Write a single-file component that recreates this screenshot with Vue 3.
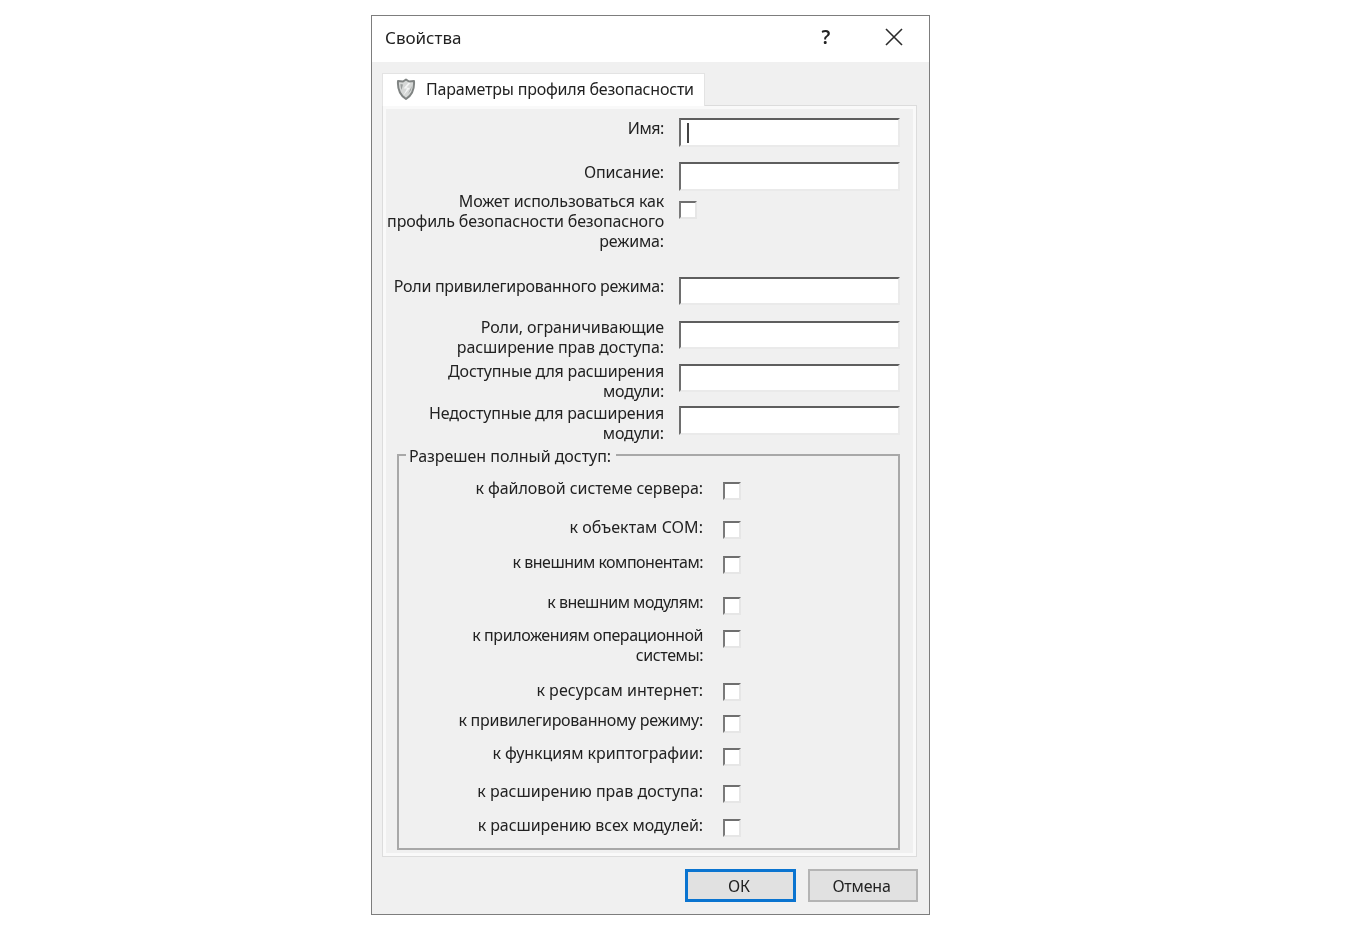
<template>
  <div class="page">
    <div class="dialog">
      <div class="titlebar">
        <span class="title">Свойства</span>
        <span class="help">?</span>
        <svg class="close" width="18" height="18" viewBox="0 0 18 18">
          <path d="M1 1 L17 17 M17 1 L1 17" stroke="#2b2b2b" stroke-width="1.6" fill="none" />
        </svg>
      </div>
      <div class="body">
        <div class="tabs">
          <div class="tab">
            <svg class="shield" width="20" height="22" viewBox="0 0 20 22">
              <path d="M10 1.500 L13 3.500 L18 3 C18.500 10 17 16.500 10 21 C3 16.500 1.500 10 2 3 L7 3.500 Z" fill="#d6d8d7" stroke="#7f8382" stroke-width="2" stroke-linejoin="round" />
              <path d="M12.500 4.500 L7.500 10.500 L11 10.500 L7 18 L14 10 L10.500 9.500 L14.500 5 Z" fill="#f4f5f5" />
              <path d="M4.500 6 L7 6.500 L5.500 12 C5 10 4.300 8 4.500 6 Z" fill="#9a9e9d" />
              <path d="M15.800 8 L15 12 L12 16 Z" fill="#9a9e9d" />
            </svg>
            <span>Параметры профиля безопасности</span>
          </div>
        </div>
        <div class="panel">
          <div class="form">
            <div v-for="r in formRows" :key="r.label" class="row" :style="{ height: r.h + 'px' }">
              <div class="label form-label" :style="{ marginTop: r.off + 'px', letterSpacing: r.ls + 'px' }">{{ r.label }}</div>
              <div v-if="r.check" class="check check-top" />
              <div v-else class="input" :class="{ caret: r.caret }" :style="{ height: r.ih + 'px' }" />
            </div>
          </div>
          <div class="group">
            <div class="legend">Разрешен полный доступ:</div>
            <div v-for="r in accessRows" :key="r.label" class="row" :style="{ height: r.h + 'px' }">
              <div class="label group-label" :style="{ marginTop: r.off + 'px', letterSpacing: r.ls + 'px' }">{{ r.label }}</div>
              <div class="check" />
            </div>
          </div>
        </div>
        <div class="buttons">
          <div class="btn default">ОК</div>
          <div class="btn">Отмена</div>
        </div>
      </div>
    </div>
  </div>
</template>

<script setup>
const formRows = [
  { label: 'Имя:', h: 44, off: 0, ih: 29, ls: -0.4, caret: true },
  { label: 'Описание:', h: 29, off: 0, ih: 29, ls: -0.16 },
  { label: 'Может использоваться как\nпрофиль безопасности безопасного\nрежима:', h: 86, off: 0, ls: -0.15, check: true },
  { label: 'Роли привилегированного режима:', h: 44, off: -1, ih: 28, ls: -0.27 },
  { label: 'Роли, ограничивающие\nрасширение прав доступа:', h: 43, off: -4, ih: 28, ls: -0.08 },
  { label: 'Доступные для расширения\nмодули:', h: 42, off: -3, ih: 28, ls: -0.19 },
  { label: 'Недоступные для расширения\nмодули:', h: 49, off: -3, ih: 29, ls: -0.16 },
]

const accessRows = [
  { label: 'к файловой системе сервера:', h: 39, off: -4, ls: -0.05 },
  { label: 'к объектам COM:', h: 35, off: -4, ls: 0.06 },
  { label: 'к внешним компонентам:', h: 41, off: -4, ls: -0.5 },
  { label: 'к внешним модулям:', h: 33, off: -5, ls: -0.5 },
  { label: 'к приложениям операционной\nсистемы:', h: 53, off: -5, ls: -0.42 },
  { label: 'к ресурсам интернет:', h: 32, off: -3, ls: 0.03 },
  { label: 'к привилегированному режиму:', h: 33, off: -5, ls: -0.27 },
  { label: 'к функциям криптографии:', h: 37, off: -5, ls: -0.06 },
  { label: 'к расширению прав доступа:', h: 34, off: -4, ls: 0 },
  { label: 'к расширению всех модулей:', h: 31, off: -4, ls: -0.08 },
]
</script>

<style>
html, body {
  background: #fff;
}
</style>

<style scoped>
.page {
  width: 1368px;
  height: 943px;
  padding: 15px 0 0 371px;
  box-sizing: border-box;
  font-family: "Noto Sans", sans-serif;
  font-size: 16px;
  line-height: 20px;
  letter-spacing: -0.2px;
  color: #222;
}

.dialog {
  width: 559px;
  height: 900px;
  box-sizing: border-box;
  border: 1px solid #7d7d7d;
  background: #f0f0f0;
  display: flex;
  flex-direction: column;
  filter: blur(0.45px);
}

.titlebar {
  height: 46px;
  flex: none;
  background: #fff;
  display: flex;
  align-items: center;
  padding-left: 13px;
  padding-bottom: 2px;
  box-sizing: border-box;
}

.title {
  flex: 1;
  font-size: 17px;
  letter-spacing: 0;
}

.help {
  font-size: 19px;
  font-weight: 600;
  margin-right: 55px;
  margin-top: -2px;
}

.close {
  margin-right: 26px;
  margin-top: -2px;
}

.body {
  flex: 1;
  padding: 11px 12px 0 10px;
  display: flex;
  flex-direction: column;
}

.tabs {
  display: flex;
  height: 32px;
  flex: none;
}

.tab {
  width: 323px;
  height: 33px;
  box-sizing: border-box;
  background: #fff;
  border: 1px solid #e3e3e3;
  border-bottom: none;
  display: flex;
  align-items: center;
  gap: 10px;
  padding: 0 0 3px 13px;
  position: relative;
  z-index: 1;
}

.panel {
  height: 752px;
  flex: none;
  box-sizing: border-box;
  border: 1px solid #dcdcdc;
  outline: 3px solid #f9f9f9;
  outline-offset: -4px;
  padding: 12px 16px 0 14px;
}

.row {
  display: flex;
  align-items: flex-start;
  flex: none;
}

.label {
  text-align: right;
  flex: none;
  white-space: pre-line;
}

.form-label {
  width: 281px;
  margin-left: -14px;
  margin-right: 15px;
}

.input {
  width: 221px;
  box-sizing: border-box;
  background: #fff;
  border: 2px solid #eaeaea;
  border-top-color: #5e5e5e;
  border-left-color: #6e6e6e;
  position: relative;
}

.caret::before {
  content: "";
  position: absolute;
  left: 6px;
  top: 3px;
  width: 2px;
  height: 20px;
  background: #444;
}

.check {
  width: 18px;
  height: 18px;
  box-sizing: border-box;
  background: #fff;
  border: 2px solid #e6e6e6;
  border-top-color: #6f6f6f;
  border-left-color: #7a7a7a;
  flex: none;
}

.check-top {
  margin-top: 10px;
}

.group {
  position: relative;
  width: 503px;
  height: 396px;
  margin-top: -1px;
  box-sizing: border-box;
  border: 2px solid #a8a8a8;
  padding-top: 26px;
}

.legend {
  position: absolute;
  left: 7px;
  top: -10px;
  background: #f0f0f0;
  padding: 0 5px 0 3px;
  letter-spacing: -0.04px;
}

.group-label {
  width: 304px;
  margin-right: 20px;
}

.buttons {
  display: flex;
  justify-content: flex-end;
  gap: 12px;
  margin-top: 12px;
  margin-right: -1px;
}

.btn {
  width: 110px;
  height: 33px;
  box-sizing: border-box;
  background: #e1e1e1;
  border: 2px solid #b4b4b4;
  display: flex;
  align-items: center;
  justify-content: center;
  padding-right: 3px;
}

.default {
  width: 111px;
  border: 3px solid #0a74d0;
}
</style>
